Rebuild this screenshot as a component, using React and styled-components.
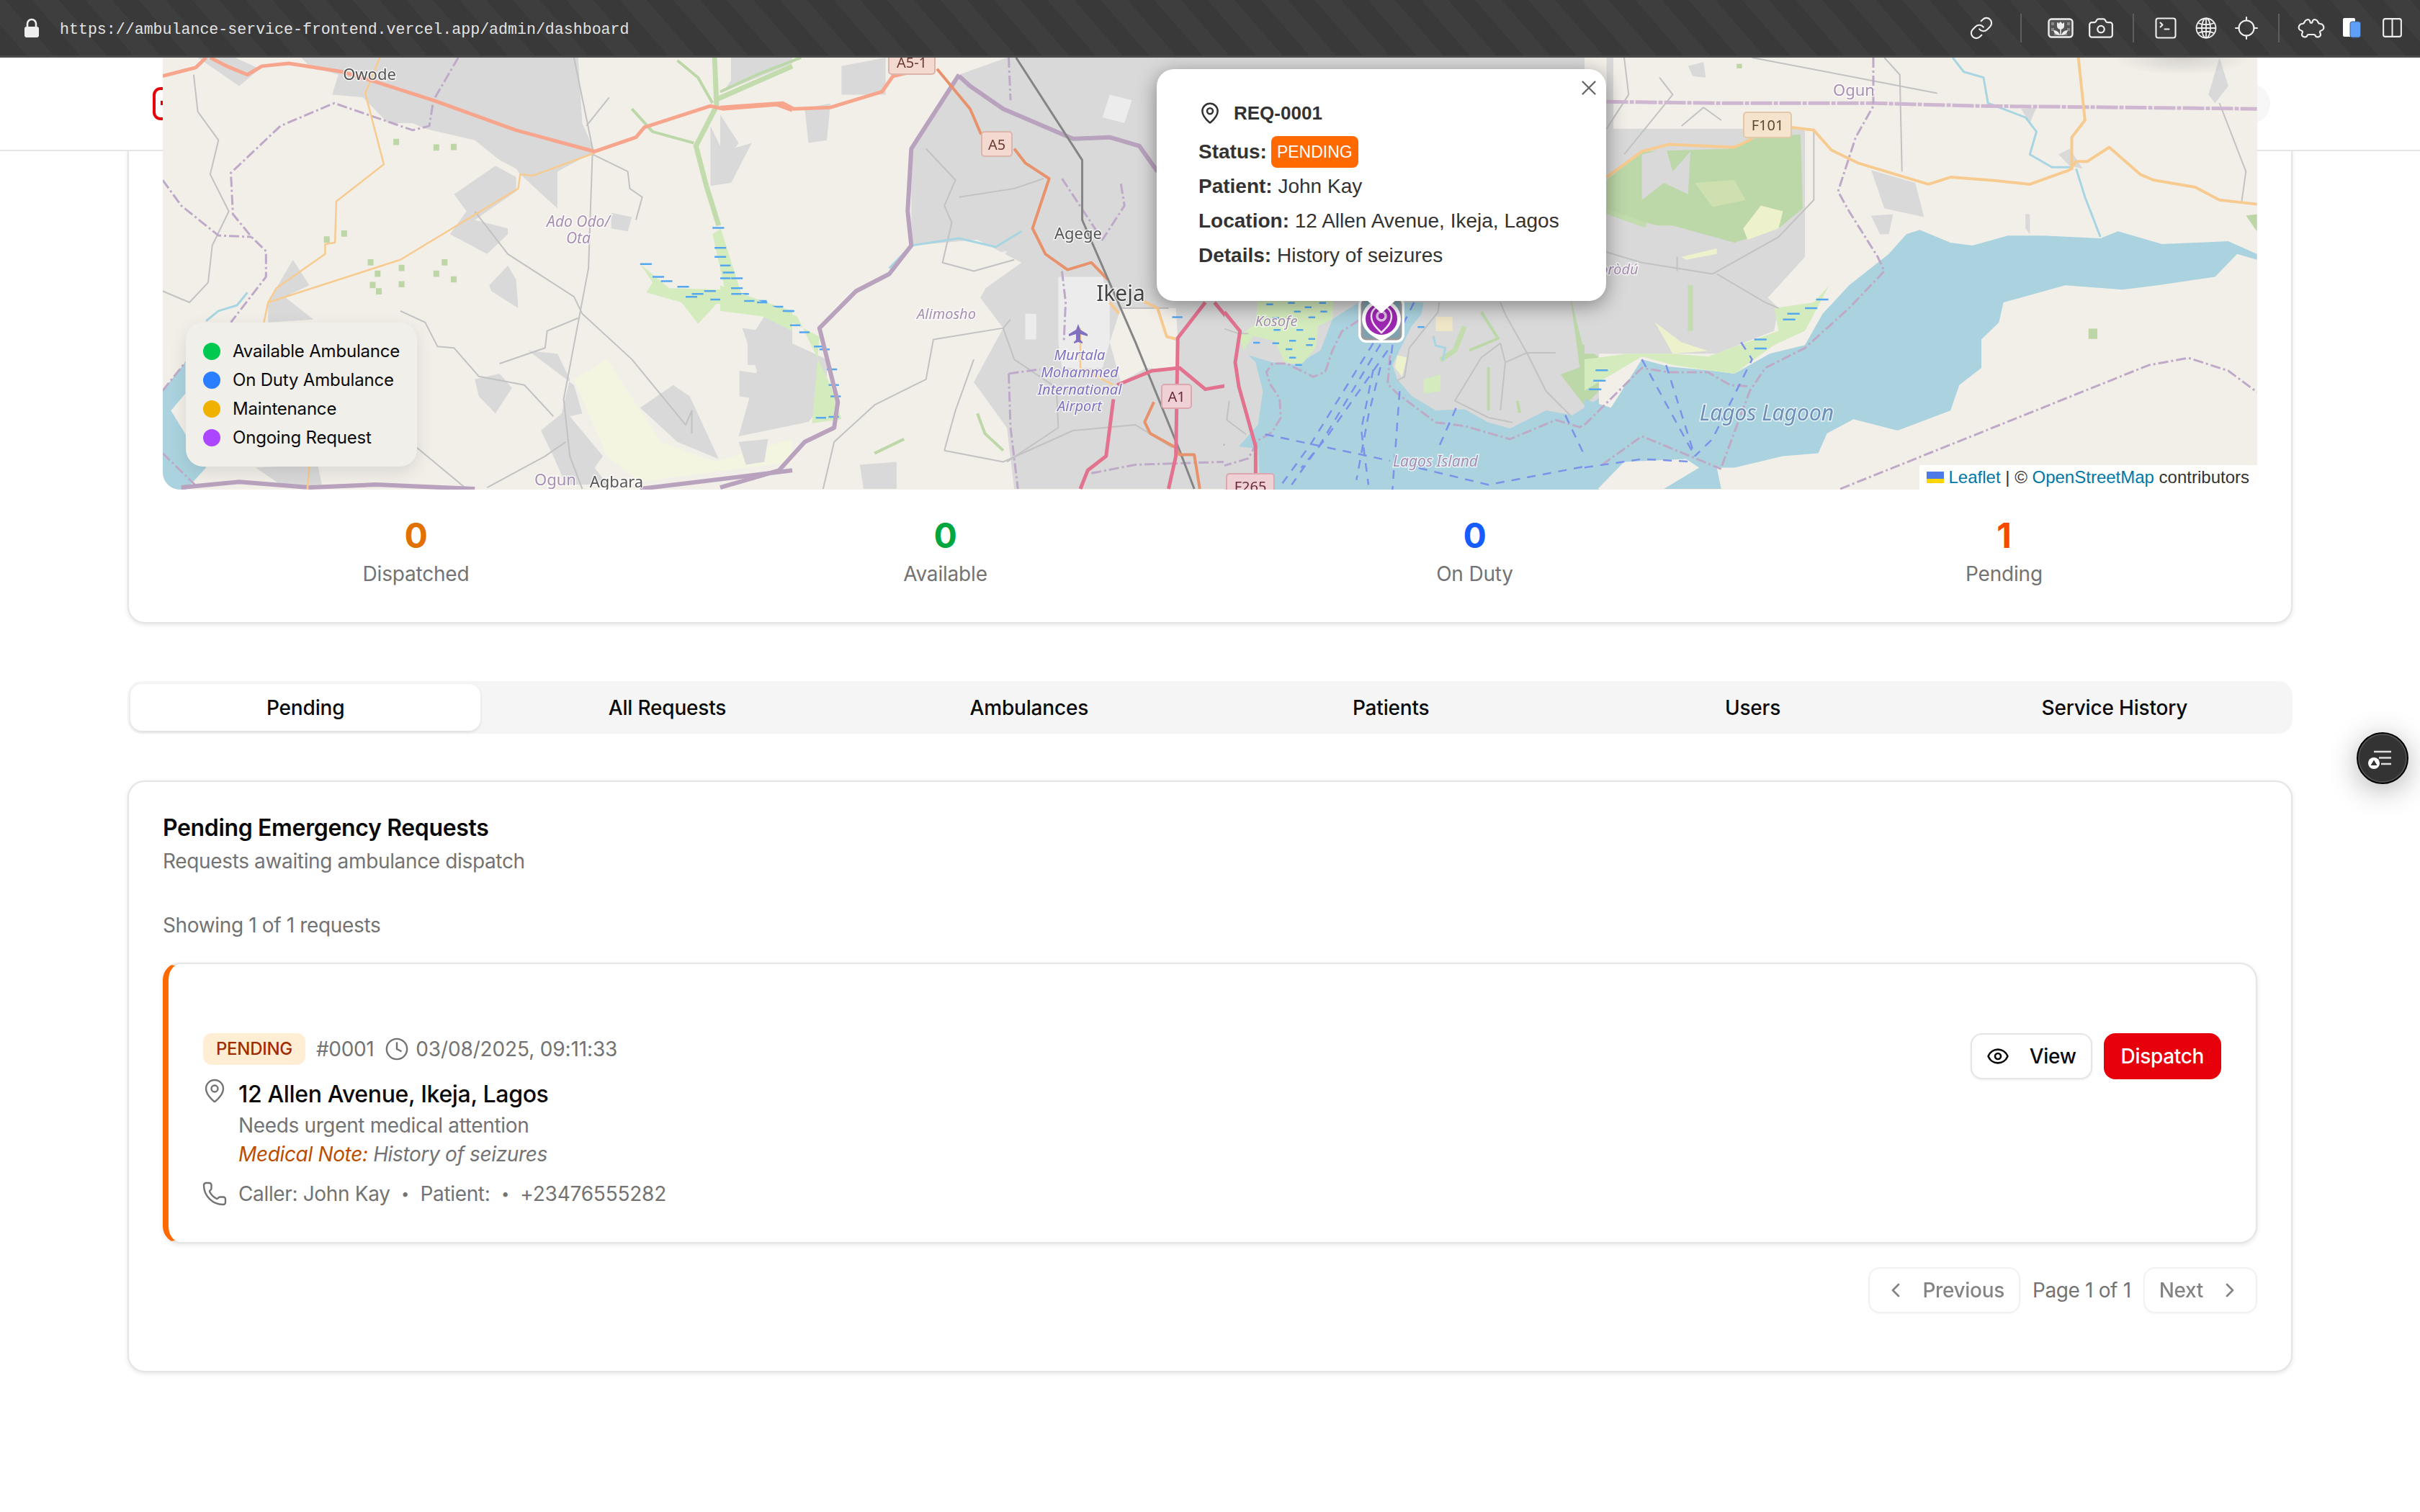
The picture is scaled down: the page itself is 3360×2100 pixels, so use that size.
import React from 'react'
import styled, { createGlobalStyle, css } from 'styled-components'
import {
  Camera, ChevronLeft, ChevronRight, Clock, Columns2, Eye, Link, Locate,
  MapPin, Phone, SquareTerminal, X,
} from 'lucide-react'

const GlobalStyle = createGlobalStyle`
  html, body {
    margin: 0;
    background: #fff;
    font-family: Inter, "Noto Sans", sans-serif;
    color: #0a0a0a;
  }
`

// map pieces, one style per kind of OSM feature
const fills = {
  urban: '#d9d9d9',
  water: '#aad3df',
  forest: '#bcd8a8',
  scrub: '#cfe0b0',
  wet: '#d4ebbd',
  pale: '#eef2cc',
  paleSoft: '#f3f5e0',
  farm: '#bcd6a6',
  sand: '#efe6c8',
  land: '#f2efe9',
  airport: '#ececec',
}

const strokes = {
  trunk: ['#f7a58c', 5],
  trunkDark: ['#e8926c', 4],
  primary: ['#f7cb8f', 4],
  secondary: ['#f7cb8f', 2.5],
  motorway: ['#e3728f', 5],
  minor: ['#c2c2c2', 2],
  rail: ['#858585', 3],
  admin: ['#bfa9c8', 3, '14 4 3 4'],
  adminThick: ['#b9a2be', 6],
  adminWide: ['#cfb7d2', 5, '30 2 6 2'],
  river: ['#a8d5e2', 3],
  greenLine: ['#c2dcae', 7],
  greenThin: ['#bcd8a8', 4],
  ferry: ['#7c92ea', 2.5, '12 10'],
  marsh: ['#55a7f0', 2.5],
}

const Feature = styled.path`
  vector-effect: non-scaling-stroke;
  stroke-linejoin: round;
  ${p => fills[p.$kind] && css`fill: ${fills[p.$kind]};`}
  ${p => strokes[p.$kind] && css`
    fill: none;
    stroke: ${strokes[p.$kind][0]};
    stroke-width: ${strokes[p.$kind][1]}px;
    stroke-dasharray: ${strokes[p.$kind][2] || 'none'};
  `}
`

const marsh = pts => pts.map(([x, y]) => `M${x} ${y}h28`).join('')
const squares = pts => pts.map(([x, y]) => `M${x} ${y}h14v22h-14z`).join('')

// each group is traced in the coordinates of one crop of the reference
const westMap = [
  ['water', 'M45 1170L100 1070L100 1180L65 1240L150 1440L100 1520L45 1520Z'],
  ['urban', 'M400 30L470 60L455 130L530 140L590 230L650 230L680 250L800 290L860 360L900 390L910 410L1000 530L1000 400L1090 330L1060 230L1050 0L380 0Z'],
  ['urban', 'M130 0L160 30L230 100L280 40L220 0Z'],
  ['urban', 'M750 480L850 380L900 420L900 470L800 570L880 600L880 620L830 690L740 620L780 540Z'],
  ['urban', 'M835 800L880 730L900 780L905 880L840 820Z'],
  ['urban', 'M300 860L360 710L400 800L340 840L410 920L300 930Z'],
  ['urban', 'M1130 545L1180 560L1170 610L1130 600Z'],
  ['urban', 'M1370 240L1400 330L1470 300L1420 440L1370 450Z'],
  ['urban', 'M1400 120L1568 20L1568 0L1420 0L1420 80Z'],
  ['urban', 'M930 1030L1000 1040L1030 1130L1010 1250L960 1310L990 1400L1020 1500L1120 1500L1090 1440L1110 1400L1030 1260L1060 1250L1040 1150Z'],
  ['urban', 'M1200 1230L1280 1150L1320 1190L1390 1410L1290 1350Z'],
  ['urban', 'M1440 1100L1490 1110L1490 1200L1440 1190Z'],
  ['urban', 'M1460 1000L1500 910L1568 960L1568 1210L1500 1210L1500 1080L1460 1080Z'],
  ['urban', 'M800 1130L860 1110L890 1160L850 1250L810 1190Z'],
  ['urban', 'M270 1440L420 1430L430 1500L340 1510Z'],
  ['paleSoft', 'M1040 1130L1120 1060L1250 1350L1380 1420L1568 1340L1568 1420L1200 1490L1120 1400Z'],
  ['farm', squares([[603, 285], [700, 305], [742, 303], [435, 628], [477, 607], [541, 708], [558, 748], [616, 728], [616, 785], [720, 708], [700, 748], [742, 768], [546, 788], [561, 810]])],
  ['greenLine', 'M1380 0L1385 170L1335 310L1360 450L1390 590'],
  ['greenLine', 'M1568 30L1380 150'],
  ['greenThin', 'M1290 10L1340 70L1375 160'],
  ['greenThin', 'M1180 180L1230 260L1330 300'],
  ['wet', 'M1200 725L1270 810L1405 815L1375 620L1395 600L1445 830L1568 890L1568 960L1440 870L1385 865L1340 935L1300 860L1215 825L1230 790Z'],
  ['marsh', marsh([[1200, 725], [1230, 770], [1250, 785], [1290, 805], [1310, 840], [1325, 830], [1355, 820], [1395, 830], [1435, 830], [1370, 850], [1440, 855], [1478, 855], [1518, 875], [1545, 890], [1375, 598], [1380, 668], [1380, 700], [1400, 755], [1420, 775], [1420, 810]])],
  ['minor', 'M120 60L130 190L180 290L160 410L205 540L165 660L155 790L110 860L45 820'],
  ['minor', 'M1040 0L1085 320L1075 740L1015 1200L1030 1400L1060 1515'],
  ['minor', 'M800 540L880 690L1040 840L1060 900L1180 1060L1310 1290L1325 1240L1325 1320'],
  ['minor', 'M620 890L680 930L710 1015L750 1020L810 1120L920 1150L990 1260'],
  ['minor', 'M660 1370L780 1515'],
  ['minor', 'M860 1075L970 1020L975 960L1050 915'],
  ['minor', 'M830 1510L970 1400L1020 1350'],
  ['minor', 'M1085 340L1170 400L1175 460L1205 490L1190 570'],
  ['minor', 'M1125 140L1070 240'],
  ['river', 'M150 925L180 890L225 870L250 825'],
  ['admin', 'M760 0L700 150L690 240L650 255L460 160L330 240L210 405L215 550L260 630L295 680L295 770L210 930'],
  ['admin', 'M45 430L90 520L180 625L260 630'],
  ['admin', 'M45 1170L100 1070'],
  ['admin', 'M45 1390L130 1510'],
  ['adminThick', 'M90 1510L230 1490L400 1510L560 1500L800 1515'],
  ['adminThick', 'M1200 1515L1568 1450'],
  ['secondary', 'M570 0L535 125L580 375L465 505L462 650L438 655L438 690L320 810L300 860L290 930'],
  ['secondary', 'M1090 335L940 415L910 410L905 460L620 710L300 860'],
  ['secondary', 'M400 1430L395 1520'],
  ['trunk', 'M45 65L125 35L150 0M160 0L200 30L250 60L285 30L350 20L480 50L560 85L700 150L900 255L1090 330L1190 280L1210 245L1370 170L1400 180L1530 165L1568 185'],
]

const centreMap = [
  ['urban', 'M520 320L650 60L780 0L1568 0L1568 1515L800 1515L780 1300L690 1140L770 950L700 830L820 720L700 640L520 660Z'],
  ['land', 'M605 720L780 680L705 850L760 950L690 1140L610 1100L580 980Z'],
  ['airport', 'M920 770L1040 770L1060 860L1060 1000L1040 1090L930 1090L920 1000Z'],
  ['land', 'M1090 880L1240 880L1245 985L1240 1100L1160 1090L1090 1140L1060 1000Z'],
  ['airport', 'M830 900L860 900L860 990L830 990Z'],
  ['airport', 'M1060 130L1120 150L1100 230L1040 210Z'],
  ['urban', 'M0 200L50 300L0 400Z'],
  ['urban', 'M230 180L300 160L290 290L240 300Z'],
  ['urban', 'M330 30L450 0L450 130L330 130Z'],
  ['urban', 'M60 950L120 960L290 1060L290 1200L240 1280L50 1330L100 1100Z'],
  ['urban', 'M50 1350L130 1340L120 1420L70 1430Z'],
  ['urban', 'M380 1430L480 1420L480 1515L390 1515Z'],
  ['wet', 'M0 800L100 850L210 910L300 1150L330 1270L250 1285L270 980L180 920L0 890Z'],
  ['wet', 'M1420 870L1568 870L1568 1030L1450 1060L1400 1030Z'],
  ['water', 'M1568 1045L1460 1090L1420 1200L1460 1515L1568 1515Z'],
  ['greenThin', 'M0 120L100 60L220 0'],
  ['greenThin', 'M420 1390L500 1340'],
  ['greenThin', 'M700 1250L720 1320L770 1380'],
  ['marsh', marsh([[0, 730], [0, 775], [30, 830], [65, 855], [100, 860], [170, 890], [190, 940], [215, 965], [255, 1015], [270, 1025], [290, 1095], [295, 1150], [300, 1190], [260, 1265], [295, 1262], [1230, 912], [1490, 868], [1535, 870], [1530, 955], [1420, 1020], [1500, 1050], [1370, 1360]])],
  ['minor', 'M560 320L640 430L610 520L630 580L605 720L690 750L800 710'],
  ['minor', 'M650 490L800 460L880 425'],
  ['minor', 'M790 920L770 950L580 990L560 1130L420 1220L310 1350L280 1515'],
  ['minor', 'M770 950L800 1060L915 1160L920 1300L780 1420'],
  ['minor', 'M610 1380L770 1420L960 1310L1130 1290L1230 1370'],
  ['minor', 'M690 1060L640 1240L610 1380'],
  ['minor', 'M1090 880L1220 880'],
  ['river', 'M460 740L520 660L650 635L750 665L820 610'],
  ['adminThick', 'M650 60L520 320L510 540L520 660L460 760L370 820L270 950L320 1210L310 1300L230 1350L160 1450L0 1510'],
  ['adminThick', 'M650 65L680 100L770 180L960 285L1060 280L1140 310L1190 400'],
  ['admin', 'M785 0L790 150'],
  ['admin', 'M930 425L1040 640L1100 520L1090 440'],
  ['admin', 'M930 750L940 860L935 1000M785 1110L870 1095M785 1110L790 1300L810 1515'],
  ['admin', 'M1010 1460L1130 1430L1370 1420'],
  ['trunk', 'M0 175L170 160L200 180L300 175L440 120L470 65L520 50'],
  ['trunkDark', 'M590 40L680 180L710 270M800 320L830 370L895 425L850 600L885 690L945 745L1010 720L1055 780'],
  ['rail', 'M805 0L985 360L985 570L1130 1000L1250 1380L1290 1515'],
  ['primary', 'M1150 855L1190 880L1215 980L1245 990'],
  ['primary', 'M1060 860L1085 900'],
  ['secondary', 'M980 950L980 1090L1070 1150'],
  ['trunkDark', 'M1180 1210L1155 1280L1170 1320L1240 1370L1250 1395L1290 1395L1305 1515'],
  ['motorway', 'M1320 860L1245 985L1240 1400L1220 1515'],
  ['motorway', 'M1345 860L1415 970L1400 1140L1460 1400L1465 1515'],
  ['motorway', 'M1080 1150L1175 1100L1250 1090L1320 1165L1410 1145'],
  ['motorway', 'M1070 1200L1050 1400L1000 1450L980 1515'],
]

const harbourMap = [
  ['urban', 'M0 0L1560 0L1560 810L0 810Z'],
  ['water', 'M100 250L200 280L300 290L400 230L450 100L560 30L830 30L820 80L780 130L720 250L700 290L720 350L780 420L880 480L1000 475L1100 530L1190 555L1340 480L1450 500L1560 430L1560 810L150 810L140 640L60 630L140 540L160 400L130 280Z'],
  ['wet', 'M140 0L455 0L450 100L390 130L380 220L320 290L250 280L210 190L120 170L80 230L60 170L130 120Z'],
  ['sand', 'M880 90L950 90L950 150L880 150Z'],
  ['forest', 'M1440 0L1490 200L1560 260L1560 400L1500 460L1400 330L1480 300Z'],
  ['greenLine', 'M1000 130L960 230L900 270'],
  ['greenThin', 'M1070 70L1140 180L1020 230'],
  ['wet', 'M830 350L900 330L900 400L830 410Z'],
  ['greenThin', 'M1100 300L1100 480'],
  ['greenThin', 'M1220 440L1230 490'],
  ['pale', 'M720 250L760 260L740 340L710 300Z'],
  ['minor', 'M895 30L890 70L770 220L750 340L720 355'],
  ['minor', 'M1150 30L1170 80L1260 240L1340 400L1440 500'],
  ['minor', 'M1150 200L1070 260L960 440L1100 510L1200 530'],
  ['minor', 'M1170 280L1260 240L1380 240'],
  ['minor', 'M1170 280L1150 200M1170 280L1150 480'],
  ['minor', 'M0 140L60 160L100 160'],
  ['minor', 'M20 440L10 520L90 580'],
  ['river', 'M870 170L880 210L920 220L910 270'],
  ['admin', 'M560 105L490 150L450 230L420 320L370 340L260 285L200 285L175 320L190 370L230 430L235 510L200 570L140 605L100 680L0 710'],
  ['admin', 'M690 250L680 370L720 410L880 530L1000 545L1190 600L1380 520L1480 550L1560 510'],
  ['ferry', 'M790 30L700 210L690 290'],
  ['ferry', 'M620 200L360 620L230 800'],
  ['ferry', 'M650 205L400 620L280 790'],
  ['ferry', 'M680 230L420 600L320 720'],
  ['ferry', 'M650 300L600 500L550 770'],
  ['ferry', 'M620 310L570 560L600 790'],
  ['ferry', 'M730 400L700 810'],
  ['ferry', 'M965 470L890 640'],
  ['ferry', 'M170 580L550 660L690 690'],
  ['ferry', 'M810 720L1100 790L1520 710'],
  ['ferry', 'M1420 500L1520 710L1560 790'],
  ['marsh', marsh([[175, 38], [265, 32], [335, 50], [395, 32], [400, 68], [290, 68], [350, 92], [200, 95], [300, 145], [205, 145], [270, 190], [350, 182], [200, 200], [340, 208], [255, 225], [120, 198], [270, 260], [295, 290], [805, 133]])],
  ['motorway', 'M0 70L65 150L45 280L60 380L130 630L130 750'],
]

const eastMap = [
  ['urban', 'M0 250L500 250L500 700L300 1040L0 1040Z'],
  ['land', 'M0 0L50 0L50 250L0 300Z'],
  ['water', 'M0 1200L60 1230L130 1060L190 1085L290 1100L340 1110L420 1040L500 1010L540 900L600 800L690 690L730 620L760 605L830 650L880 660L960 625L1040 625L1170 635L1210 610L1310 655L1460 645L1525 690L1525 710L1480 690L1430 770L1300 800L1220 815L1090 800L950 860L940 930L900 990L900 1090L850 1150L830 1240L710 1310L610 1270L550 1320L530 1390L450 1400L340 1440L300 1440L310 1515L0 1515Z'],
  ['land', 'M30 1515L90 1420L230 1410L260 1440L180 1515Z'],
  ['forest', 'M50 430L130 330L330 320L380 285L490 270L495 530L440 600L340 650L200 590L130 590L50 540Z'],
  ['urban', 'M130 340L185 320L200 400L240 330L235 480L180 440L130 500Z'],
  ['scrub', 'M250 440L340 430L365 500L290 525Z'],
  ['pale', 'M400 520L450 540L440 600L370 640L360 600Z'],
  ['urban', 'M50 660L140 580L340 660L300 700L380 790L440 880L430 960L300 1040L170 930L140 1040L50 1040L0 960L0 700Z'],
  ['wet', 'M0 1170L130 1050L200 1080L290 1100L340 1110L430 1010L500 960L555 800L520 860L430 880L440 960L280 1050L200 1040L100 1040L0 1060Z'],
  ['pale', 'M220 700L300 670L300 690L230 710Z'],
  ['pale', 'M160 930L220 1000L280 1030L200 1040Z'],
  ['greenLine', 'M240 800L240 960'],
  ['greenLine', 'M50 540L140 590'],
  ['urban', 'M650 395L750 440L770 560L680 530Z'],
  ['urban', 'M650 555L700 550L690 620L670 620Z'],
  ['urban', 'M235 30L270 15L275 70L245 65Z'],
  ['urban', 'M1415 130L1440 0L1460 100L1430 160Z'],
  ['urban', 'M990 180L1025 175L1010 230Z'],
  ['urban', 'M1075 340L1100 320L1130 390L1100 380Z'],
  ['urban', 'M1000 550L1010 550L1010 620L1000 600Z'],
  ['farm', 'M1143 952h20v36h-20z'],
  ['farm', 'M1500 555L1525 550L1525 610Z'],
  ['farm', 'M345 22h12v16h-12z'],
  ['minor', 'M380 0L800 125'],
  ['minor', 'M680 0L715 60L720 400'],
  ['minor', 'M520 250L520 500L440 630L290 760L130 720L0 660'],
  ['minor', 'M300 760L410 860L440 880M210 750L210 700'],
  ['minor', 'M1440 160L1500 400L1490 510'],
  ['minor', 'M90 0L100 130L50 250M170 70L200 130L90 340'],
  ['minor', 'M220 240L270 175L310 220'],
  ['river', 'M835 0L860 50L905 70L915 160L1000 210L1025 260L1010 340L1060 385L1105 385'],
  ['river', 'M1115 390L1135 490L1170 630'],
  ['adminWide', 'M50 155L300 160L650 160L900 170L1525 180'],
  ['admin', 'M655 0L655 170L615 280L575 470L600 540L665 700L680 750L600 880L500 1020L410 1090L375 1170L310 1440'],
  ['admin', 'M580 1515L1280 1080L1370 1055L1460 1100L1525 1175'],
  ['admin', 'M0 1290L130 1090L190 1105L280 1105L330 1150L375 1155'],
  ['admin', 'M40 1430L130 1330L310 1445'],
  ['ferry', 'M130 1060L250 1400'],
  ['ferry', 'M185 1080L250 1400'],
  ['ferry', 'M355 1000L380 1060L290 1340L250 1400'],
  ['ferry', 'M0 1440L130 1410L250 1420'],
  ['marsh', marsh([[525, 850], [500, 880], [460, 900], [450, 920], [385, 990], [385, 1022], [25, 1098], [20, 1135], [10, 1165]])],
  ['primary', 'M50 420L130 330L190 305L340 315L380 285M470 245L520 255L560 325L620 370L780 445L830 420L930 432L1010 445L1100 395L1115 365L1140 365L1190 315L1260 410L1290 430L1385 455L1440 500L1525 515'],
  ['primary', 'M1120 0L1135 220L1105 280L1105 395'],
]

const labels = [
  { x: 513, y: 102, size: 22, color: '#555', text: 'Owode' },
  { x: 803, y: 307, size: 21, color: '#a88fb2', italic: true, text: 'Ado Odo/' },
  { x: 803, y: 330, size: 21, color: '#a88fb2', italic: true, text: 'Ota' },
  { x: 771, y: 665, size: 22, color: '#a88fb2', text: 'Ogun' },
  { x: 856, y: 668, size: 22, color: '#555', text: 'Agbara' },
  { x: 1497, y: 323, size: 22, color: '#555', text: 'Agege' },
  { x: 1556, y: 406, size: 30, color: '#444', text: 'Ikeja' },
  { x: 1314, y: 435, size: 20, color: '#a88fb2', italic: true, text: 'Alimosho' },
  { x: 1499, y: 492, size: 20, color: '#8270c0', italic: true, text: 'Murtala' },
  { x: 1499, y: 516, size: 20, color: '#8270c0', italic: true, text: 'Mohammed' },
  { x: 1499, y: 540, size: 20, color: '#8270c0', italic: true, text: 'International' },
  { x: 1499, y: 563, size: 20, color: '#8270c0', italic: true, text: 'Airport' },
  { x: 1772, y: 445, size: 20, color: '#a88fb2', italic: true, text: 'Kosofe' },
  { x: 2240, y: 373, size: 20, color: '#a88fb2', italic: true, text: 'Ìkòròdú' },
  { x: 2574, y: 124, size: 22, color: '#a88fb2', text: 'Ogun' },
  { x: 2453, y: 572, size: 30, color: '#6d8fb8', italic: true, text: 'Lagos Lagoon' },
  { x: 1993, y: 640, size: 21, color: '#a88fb2', italic: true, text: 'Lagos Island' },
]

const shields = [
  { x: 1234, y: 70, w: 64, h: 33, label: 'A5-1', fill: '#f3d9d0', line: '#dcb5aa', ink: '#6b3a32' },
  { x: 1363, y: 183, w: 42, h: 34, label: 'A5', fill: '#f3d9d0', line: '#dcb5aa', ink: '#6b3a32' },
  { x: 1613, y: 534, w: 41, h: 33, label: 'A1', fill: '#efd0d4', line: '#dba8b0', ink: '#6b2a3a' },
  { x: 1703, y: 658, w: 66, h: 34, label: 'F265', fill: '#efd0d4', line: '#dba8b0', ink: '#6b2a3a' },
  { x: 2421, y: 156, w: 66, h: 35, label: 'F101', fill: '#f5e3cd', line: '#e0c9a8', ink: '#5c4a30' },
]

const legend = [
  { color: '#00c950', label: 'Available Ambulance' },
  { color: '#2b7fff', label: 'On Duty Ambulance' },
  { color: '#f0b100', label: 'Maintenance' },
  { color: '#ad46ff', label: 'Ongoing Request' },
]

const stats = [
  { value: 0, label: 'Dispatched', color: '#e17100' },
  { value: 0, label: 'Available', color: '#00a63e' },
  { value: 0, label: 'On Duty', color: '#155dfc' },
  { value: 1, label: 'Pending', color: '#f54900' },
]

const tabs = ['Pending', 'All Requests', 'Ambulances', 'Patients', 'Users', 'Service History']

const Features = ({ items, transform }) => (
  <g transform={transform}>
    {items.map(([kind, d], i) => <Feature key={i} $kind={kind} d={d}/>)}
  </g>
)

const MapDrawing = () => (
  <MapSvg viewBox="226 80 2908 600" width="2908" height="600">
    <defs>
      <radialGradient id="barShade">
        <stop offset="0" stopColor="#000" stopOpacity="0.12"/>
        <stop offset="1" stopColor="#000" stopOpacity="0"/>
      </radialGradient>
    </defs>
    <rect x="1700" y="80" width="540" height="340" fill="#d9d9d9"/>
    <Features items={westMap} transform="translate(200 80) scale(0.574 0.3954)"/>
    <Features items={centreMap} transform="translate(1000 80) scale(0.5102 0.3954)"/>
    <Features items={harbourMap} transform="translate(1700 410) scale(0.3333)"/>
    <Features items={eastMap} transform="translate(2200 80) scale(0.6122 0.3954)"/>
    <path d="M1497 450l3 8 10 6v3l-10-3v8l3 3v2l-6-2-6 2v-2l3-3v-8l-10 3v-3l10-6z" fill="#8270c0"/>
    {labels.map(l => (
      <MapLabel key={l.text + l.x} x={l.x} y={l.y} $size={l.size} $color={l.color} $italic={l.italic}>
        {l.text}
      </MapLabel>
    ))}
    {shields.map(s => (
      <g key={s.label}>
        <rect x={s.x} y={s.y} width={s.w} height={s.h} rx="4" fill={s.fill} stroke={s.line} strokeWidth="2"/>
        <MapLabel x={s.x + s.w / 2} y={s.y + s.h / 2} $size={20} $color={s.ink} $plain>{s.label}</MapLabel>
      </g>
    ))}
    <ellipse cx="3030" cy="80" rx="95" ry="24" fill="url(#barShade)"/>
  </MapSvg>
)

const Marker = () => (
  <MarkerBox viewBox="0 0 64 64" width="64" height="64">
    <rect x="2" y="2" width="60" height="60" rx="9" fill="#7fa0ad" stroke="#fff" strokeWidth="4"/>
    <rect x="5" y="5" width="54" height="54" rx="6" fill="none" stroke="#9a9a9a" strokeWidth="3"/>
    <path d="M32 62C26 58 5 50 5 31a27 27 0 0 1 54 0C59 50 38 58 32 62Z" fill="#fff"/>
    <circle cx="32" cy="31" r="22" fill="#9c27b0"/>
    <path d="M32 50C25 43 18 37 18 27a14 14 0 0 1 28 0C46 37 39 43 32 50Z" fill="none" stroke="#f4e6f7" strokeWidth="2.5"/>
    <circle cx="32" cy="27" r="6" fill="#9c27b0" stroke="#e1bee7" strokeWidth="3.5"/>
  </MarkerBox>
)

const LockIcon = () => (
  <svg width="22" height="27" viewBox="0 0 22 27">
    <path d="M5 13V8a6 6 0 0 1 12 0v5" fill="none" stroke="#eee" strokeWidth="2.6"/>
    <rect x="1" y="12" width="20" height="15" rx="3" fill="#eee"/>
  </svg>
)

const FlowerIcon = () => (
  <svg width="36" height="28" viewBox="0 0 36 28">
    <rect x="1.5" y="1.5" width="33" height="25" rx="4" fill="#555" stroke="#eee" strokeWidth="2.4"/>
    <path d="M5 6h4v4H5zM13 6h4v4h-4zM27 6h4v4h-4zM5 14h4v4H5zM27 14h4v4h-4zM9 20h4v4H9zM23 20h4v4h-4z" fill="#8a8a8a"/>
    <path d="M13 6l2.5 2L18 5l2.5 3L23 6v5a5 5 0 0 1-10 0z" fill="#eee"/>
    <path d="M17.2 15h1.6v9h-1.6zM8 17c5 0 8 3 9 7-5 0-8-3-9-7zM28 17c-5 0-8 3-9 7 5 0 8-3 9-7z" fill="#eee"/>
  </svg>
)

const GlobeIcon = () => (
  <svg width="30" height="30" viewBox="0 0 30 30" fill="none" stroke="#eee" strokeWidth="1.8">
    <circle cx="15" cy="15" r="13.5"/>
    <ellipse cx="15" cy="15" rx="6" ry="13.5"/>
    <path d="M15 1.5v27M1.5 15h27M4 8c6 3 16 3 22 0M4 22c6-3 16-3 22 0"/>
  </svg>
)

const PuzzleIcon = () => (
  <svg width="40" height="30" viewBox="0 0 40 30" fill="none" stroke="#eee" strokeWidth="2.2" strokeLinejoin="round">
    <path d="M11 6c1-3 6-4 7-1 1 2 0 3 2 3s1-1 2-3c1-3 6-2 7 1 1 2 1 3 3 3 5 0 6 5 5 7-1 3-5 2-5 4s1 2 1 4c0 3-4 4-6 3-2-1-1-3-3-3h-8c-2 0-1 2-3 3-2 1-6 0-6-3 0-2 1-2 1-4s-4-1-5-4c-1-2 0-7 5-7 2 0 2-1 3-3z"/>
  </svg>
)

const DevicesIcon = () => (
  <svg width="25" height="29" viewBox="0 0 25 29">
    <rect x="0" y="1" width="17" height="26" rx="2" fill="#fff"/>
    <rect x="10" y="6" width="14.5" height="22" rx="3" fill="#5ea0f7" stroke="#3d5c8f" strokeWidth="1"/>
  </svg>
)

const FabIcon = () => (
  <svg width="72" height="72" viewBox="0 0 72 72">
    <circle cx="36" cy="36" r="35" fill="#333" stroke="#000" strokeWidth="2"/>
    <circle cx="36" cy="36" r="33" fill="none" stroke="#555" strokeWidth="1.5"/>
    <path d="M24 27h24M31 35.5h17M34 44h14" stroke="#ddd" strokeWidth="2.4"/>
    <circle cx="24" cy="43" r="8" fill="#fff"/>
    <path d="M24 38.5l4.5 7.5h-9z" fill="#333"/>
  </svg>
)

const App = () => (
  <Screen>
    <GlobalStyle/>
    <BrowserBar>
      <LockIcon/>
      <Url>https://ambulance-service-frontend.vercel.app/admin/dashboard</Url>
      <BarTools>
        <BarSlot><Link size={34} strokeWidth={1.5}/></BarSlot>
        <BarDivider $wide/>
        <BarSlot><FlowerIcon/></BarSlot>
        <BarSlot><Camera size={38} strokeWidth={1.4}/></BarSlot>
        <BarDivider/>
        <BarSlot><SquareTerminal size={36} strokeWidth={1.4}/></BarSlot>
        <BarSlot><GlobeIcon/></BarSlot>
        <BarSlot><Locate size={36} strokeWidth={1.4}/></BarSlot>
        <BarDivider/>
        <BarSlot><PuzzleIcon/></BarSlot>
        <BarSlot><DevicesIcon/></BarSlot>
        <BarSlot><Columns2 size={33} strokeWidth={1.5}/></BarSlot>
      </BarTools>
    </BrowserBar>

    <Viewport>
      <SiteHeader>
        <Logo width="48" height="48" viewBox="0 0 48 48" fill="none" stroke="#e7000b" strokeWidth="4">
          <rect x="2" y="3" width="42" height="42" rx="9"/>
          <path d="M13 20v6"/>
        </Logo>
        <Avatar/>
      </SiteHeader>

      <Main>
        <Card>
          <MapFrame>
            <MapDrawing/>
            <Marker/>
            <Legend>
              {legend.map(item => (
                <LegendRow key={item.label}>
                  <Dot $color={item.color}/>
                  {item.label}
                </LegendRow>
              ))}
            </Legend>
            <Popup>
              <PopupClose><X size={34} strokeWidth={1.6}/></PopupClose>
              <PopupTitle><MapPin size={32} strokeWidth={1.9}/>REQ-0001</PopupTitle>
              <StatusRow><b>Status:</b><StatusChip>PENDING</StatusChip></StatusRow>
              <PopupRow><b>Patient:</b> John Kay</PopupRow>
              <PopupRow><b>Location:</b> 12 Allen Avenue, Ikeja, Lagos</PopupRow>
              <PopupRow><b>Details:</b> History of seizures</PopupRow>
            </Popup>
            <Attribution>
              <Flag/> <a>Leaflet</a> | © <a>OpenStreetMap</a> contributors
            </Attribution>
          </MapFrame>
          <StatGrid>
            {stats.map(s => (
              <Stat key={s.label}>
                <StatValue $color={s.color}>{s.value}</StatValue>
                <StatLabel>{s.label}</StatLabel>
              </Stat>
            ))}
          </StatGrid>
        </Card>

        <TabList>
          {tabs.map((tab, i) => <Tab key={tab} $active={i === 0}>{tab}</Tab>)}
        </TabList>

        <RequestsCard>
          <Title>Pending Emergency Requests</Title>
          <Subtitle>Requests awaiting ambulance dispatch</Subtitle>
          <Showing>Showing 1 of 1 requests</Showing>

          <RequestCard>
            <RequestInfo>
              <MetaRow>
                <Badge>PENDING</Badge>
                <span>#0001</span>
                <DateStamp><Clock size={34} strokeWidth={1.7}/>03/08/2025, 09:11:33</DateStamp>
              </MetaRow>
              <AddressRow>
                <RowIcon><MapPin size={36} strokeWidth={1.6}/></RowIcon>
                <div>
                  <Address>12 Allen Avenue, Ikeja, Lagos</Address>
                  <Muted>Needs urgent medical attention</Muted>
                  <Note><em>Medical Note:</em> History of seizures</Note>
                </div>
              </AddressRow>
              <ContactRow>
                <RowIcon><Phone size={36} strokeWidth={1.6}/></RowIcon>
                <span>Caller: John Kay</span>
                <Bullet>•</Bullet>
                <span>Patient:</span>
                <Bullet>•</Bullet>
                <Digits>+23476555282</Digits>
              </ContactRow>
            </RequestInfo>
            <Actions>
              <ViewButton><Eye size={32} strokeWidth={2}/>View</ViewButton>
              <DispatchButton>Dispatch</DispatchButton>
            </Actions>
          </RequestCard>

          <Pagination>
            <PageButton><ChevronLeft size={32} strokeWidth={2}/>Previous</PageButton>
            <PageText>Page 1 of 1</PageText>
            <PageButton>Next<ChevronRight size={32} strokeWidth={2}/></PageButton>
          </Pagination>
        </RequestsCard>
      </Main>

      <Fab><FabIcon/></Fab>
    </Viewport>
  </Screen>
)

const Screen = styled.div`
  display: flex;
  flex-direction: column;
  height: 2100px;
  overflow: hidden;
`

const BrowserBar = styled.header`
  flex: none;
  display: flex;
  align-items: center;
  box-sizing: border-box;
  height: 80px;
  padding: 0 11px 0 33px;
  color: #eee;
  background: repeating-linear-gradient(49deg, #393939 0 28px, #3e3e3e 28px 56px);
  border-bottom: 3px solid #4a4a4a;
`

const Url = styled.span`
  margin: 4px 0 0 28px;
  font: 21.6px "Liberation Mono", monospace;
  color: #e2e2e2;
`

const BarTools = styled.div`
  display: flex;
  align-items: center;
  margin-left: auto;
`

const BarSlot = styled.div`
  display: flex;
  align-items: center;
  justify-content: center;
  width: 56px;
`

const BarDivider = styled.div`
  width: 2px;
  height: 40px;
  margin: 0 ${p => (p.$wide ? '26px' : '16px')};
  background: #5e5e5e;
`

const Viewport = styled.div`
  position: relative;
  flex: 1;
`

const SiteHeader = styled.div`
  position: absolute;
  top: 0;
  left: 0;
  right: 0;
  z-index: 1;
  display: flex;
  align-items: center;
  justify-content: space-between;
  box-sizing: border-box;
  height: 130px;
  padding: 0 208px 0 212px;
  background: #fff;
  border-bottom: 2px solid #e5e5e5;
`

const Logo = styled.svg`
  display: block;
`

const Avatar = styled.div`
  width: 56px;
  height: 56px;
  border-radius: 50%;
  background: #f7f7f7;
`

const Main = styled.main`
  display: flex;
  flex-direction: column;
  width: 3006px;
  margin-left: 177px;
  letter-spacing: -0.012em;
`

const Card = styled.section`
  box-sizing: border-box;
  padding: 0 47px;
  background: #fff;
  border: 2px solid #e5e5e5;
  border-top: 0;
  border-radius: 24px;
  box-shadow: 0 2px 6px rgba(0, 0, 0, 0.1);
`

const MapFrame = styled.div`
  position: relative;
  z-index: 2;
  height: 600px;
  overflow: hidden;
  background: #f2efe9;
  border-radius: 0 0 24px 24px;
`

const MapSvg = styled.svg`
  display: block;
  filter: blur(0.7px);
`

const MapLabel = styled.text`
  font-family: "Noto Sans", sans-serif;
  font-size: ${p => p.$size}px;
  font-style: ${p => (p.$italic ? 'italic' : 'normal')};
  letter-spacing: normal;
  fill: ${p => p.$color};
  text-anchor: middle;
  dominant-baseline: central;
  ${p => !p.$plain && css`
    paint-order: stroke;
    stroke: rgba(255, 255, 255, 0.7);
    stroke-width: 3px;
  `}
`

const MarkerBox = styled.svg`
  position: absolute;
  top: 332px;
  left: 1660px;
`

const Legend = styled.div`
  position: absolute;
  left: 32px;
  bottom: 32px;
  display: flex;
  flex-direction: column;
  gap: 8px;
  padding: 24px;
  background: #f1efea;
  border-radius: 24px;
  box-shadow: 0 8px 24px rgba(0, 0, 0, 0.1);
`

const LegendRow = styled.div`
  display: flex;
  align-items: center;
  gap: 17px;
  font-size: 24px;
  line-height: 32px;
`

const Dot = styled.span`
  width: 24px;
  height: 24px;
  border-radius: 50%;
  background: ${p => p.$color};
`

const Popup = styled.div`
  position: absolute;
  top: 16px;
  left: 1380px;
  box-sizing: border-box;
  width: 624px;
  height: 322px;
  padding: 37px 58px 0;
  font: 28px/48px "Liberation Sans", Arial, sans-serif;
  letter-spacing: normal;
  color: #333;
  background: #fff;
  border-radius: 24px;
  box-shadow: 0 6px 28px rgba(0, 0, 0, 0.4);

  &::after {
    content: '';
    position: absolute;
    left: 50%;
    bottom: -17px;
    margin-left: -20px;
    border-top: 18px solid #fff;
    border-left: 20px solid transparent;
    border-right: 20px solid transparent;
  }
`

const PopupClose = styled.div`
  position: absolute;
  top: 9px;
  right: 7px;
  display: flex;
  color: #666;
`

const PopupTitle = styled.div`
  display: flex;
  align-items: center;
  gap: 17px;
  margin: 0 0 6px;
  font-size: 26px;
  font-weight: 700;
`

const PopupRow = styled.div`
  height: 48px;
`

const StatusRow = styled.div`
  display: flex;
  align-items: center;
  gap: 6px;
  height: 48px;
`

const StatusChip = styled.span`
  box-sizing: border-box;
  height: 44px;
  padding: 0 8px;
  font-size: 23px;
  line-height: 44px;
  color: #fff;
  background: #ff6900;
  border-radius: 8px;
`

const Attribution = styled.div`
  position: absolute;
  right: 0;
  bottom: 0;
  height: 34px;
  padding: 0 11px 0 10px;
  font: 24px/34px "Liberation Sans", Arial, sans-serif;
  letter-spacing: normal;
  color: #333;
  background: rgba(255, 255, 255, 0.9);

  a {
    color: #0078a8;
  }
`

const Flag = styled.span`
  display: inline-block;
  width: 24px;
  height: 16px;
  background: linear-gradient(#4c7be8 0 10px, #ffd500 10px);
`

const StatGrid = styled.div`
  display: grid;
  grid-template-columns: repeat(4, 1fr);
  gap: 32px;
  padding: 32px 0 47px;
  text-align: center;
`

const Stat = styled.div``

const StatValue = styled.div`
  font-size: 48px;
  font-weight: 700;
  line-height: 64px;
  color: ${p => p.$color};
`

const StatLabel = styled.div`
  margin-top: 1px;
  font-size: 28px;
  line-height: 40px;
  color: #737373;
`

const TabList = styled.div`
  display: grid;
  grid-template-columns: repeat(6, 1fr);
  gap: 16px;
  box-sizing: border-box;
  height: 73px;
  margin-top: 80px;
  padding: 4px;
  background: #f5f5f5;
  border-radius: 20px;
`

const Tab = styled.div`
  display: flex;
  align-items: center;
  justify-content: center;
  font-size: 28px;
  font-weight: 500;
  border-radius: 16px;
  ${p => p.$active && css`
    background: #fff;
    box-shadow: 0 2px 4px rgba(0, 0, 0, 0.1);
  `}
`

const RequestsCard = styled.section`
  box-sizing: border-box;
  height: 822px;
  margin-top: 65px;
  padding: 44px 47px 0;
  background: #fff;
  border: 2px solid #e5e5e5;
  border-radius: 24px;
  box-shadow: 0 2px 6px rgba(0, 0, 0, 0.1);
  letter-spacing: -0.022em;
`

const Title = styled.h2`
  margin: 0;
  font-size: 32px;
  font-weight: 600;
  line-height: 40px;
`

const Subtitle = styled.p`
  margin: 6px 0 0;
  font-size: 28px;
  line-height: 40px;
  color: #737373;
`

const Showing = styled.p`
  margin: 49px 0 0;
  font-size: 28px;
  line-height: 40px;
  color: #737373;
`

const RequestCard = styled.article`
  display: flex;
  justify-content: space-between;
  align-items: flex-start;
  box-sizing: border-box;
  height: 390px;
  margin-top: 32px;
  padding: 96px 48px 0;
  background: #fff;
  border: 2px solid #e5e5e5;
  border-left: 8px solid #ff6900;
  border-radius: 24px;
  box-shadow: 0 2px 6px rgba(0, 0, 0, 0.1);
`

const RequestInfo = styled.div`
  font-size: 28px;
  line-height: 40px;
  color: #737373;
`

const MetaRow = styled.div`
  display: flex;
  align-items: center;
  height: 44px;
  gap: 15px;
`

const Badge = styled.span`
  box-sizing: border-box;
  height: 44px;
  padding: 0 18px;
  font-size: 24px;
  font-weight: 500;
  line-height: 44px;
  letter-spacing: -0.012em;
  color: #9f2d00;
  background: #ffedd4;
  border-radius: 12px;
`

const DateStamp = styled.span`
  display: flex;
  align-items: center;
  gap: 9px;
  letter-spacing: -0.005em;
`

const AddressRow = styled.div`
  display: flex;
  align-items: flex-start;
  gap: 15px;
  margin-top: 18px;
`

const RowIcon = styled.span`
  display: flex;
  flex: none;
  margin-left: -2px;
  color: #737373;
`

const Address = styled.h3`
  margin: 3px 0;
  font-size: 32px;
  font-weight: 500;
  line-height: 40px;
  color: #0a0a0a;
`

const Muted = styled.div``

const Note = styled.div`
  font-style: italic;

  em {
    color: #bb4d00;
  }
`

const ContactRow = styled.div`
  display: flex;
  align-items: center;
  gap: 15px;
  margin-top: 15px;
`

const Bullet = styled.span`
  width: 12px;
  font-size: 20px;
  text-align: center;
`

const Digits = styled.span`
  letter-spacing: -0.008em;
`

const Actions = styled.div`
  display: flex;
  gap: 16px;
`

const ViewButton = styled.button`
  display: flex;
  align-items: center;
  gap: 28px;
  box-sizing: border-box;
  height: 64px;
  padding: 0 20px;
  font: 500 28px Inter, sans-serif;
  letter-spacing: -0.012em;
  color: #0a0a0a;
  background: #fff;
  border: 2px solid #e5e5e5;
  border-radius: 16px;
  box-shadow: 0 1px 3px rgba(0, 0, 0, 0.08);
`

const DispatchButton = styled.button`
  box-sizing: border-box;
  height: 64px;
  padding: 0 24px;
  font: 500 28px Inter, sans-serif;
  letter-spacing: -0.012em;
  color: #fff;
  background: #e7000b;
  border: 0;
  border-radius: 16px;
`

const Pagination = styled.nav`
  display: flex;
  justify-content: flex-end;
  align-items: center;
  gap: 17px;
  margin-top: 33px;
`

const PageButton = styled.button`
  display: flex;
  align-items: center;
  gap: 21px;
  box-sizing: border-box;
  height: 64px;
  padding: 0 20px;
  font: 500 28px Inter, sans-serif;
  letter-spacing: -0.012em;
  color: #0a0a0a;
  background: #fff;
  border: 2px solid #e5e5e5;
  border-radius: 16px;
  box-shadow: 0 1px 3px rgba(0, 0, 0, 0.08);
  opacity: 0.5;
`

const PageText = styled.span`
  font-size: 28px;
  color: #737373;
`

const Fab = styled.div`
  position: absolute;
  top: 937px;
  right: 16px;
  z-index: 3;
  display: flex;
  border-radius: 50%;
  box-shadow: 0 8px 40px rgba(0, 0, 0, 0.3);
`

export default App
